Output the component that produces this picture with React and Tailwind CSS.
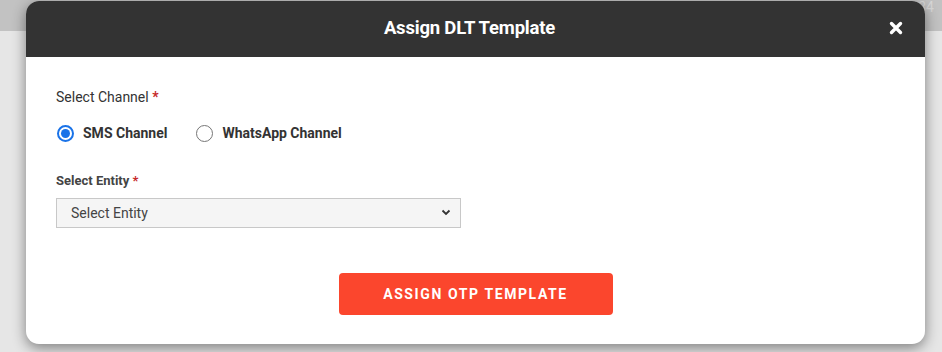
import React, { useState } from "react";

const font = { fontFamily: "Roboto, 'Liberation Sans', sans-serif" };

function Radio({ checked, label, onClick }) {
  return (
    <label className="flex items-center cursor-pointer" onClick={onClick}>
      <span
        className={`flex items-center justify-center w-[17px] h-[17px] rounded-full border-2 ${
          checked ? "border-[#1a73e8]" : "border-[#767676] border-[1.5px]"
        }`}
      >
        {checked && <span className="w-[9px] h-[9px] rounded-full bg-[#1a73e8]" />}
      </span>
      <span className="ml-[9px] text-[14px] font-bold text-[#333]">{label}</span>
    </label>
  );
}

export default function App() {
  const [channel, setChannel] = useState("sms");

  return (
    <div className="relative h-[352px] w-full overflow-hidden bg-[#e6e6e6]" style={font}>
      {/* page behind the overlay */}
      <div className="h-[31px] bg-[#c2c2c2] flex justify-end items-start pr-2">
        <span className="text-[14px] text-[#d8d8d8] leading-none">34</span>
      </div>

      {/* modal */}
      <div className="absolute left-[26px] top-[1px] w-[899px] h-[343px] bg-white rounded-[13px] overflow-hidden shadow-[0_4px_14px_rgba(0,0,0,0.45)] flex flex-col">
        <div className="relative h-[56px] bg-[#333333] flex items-center justify-center pr-[12px]">
          <h2 className="text-white text-[18.5px] font-bold tracking-[-0.2px]">Assign DLT Template</h2>
          <button type="button" className="absolute right-[22px] top-[20px] text-white">
            <svg width="14" height="14" viewBox="0 0 14 14">
              <path d="M2.5 2.5 11.5 11.5M11.5 2.5 2.5 11.5" stroke="white" strokeWidth="3.4" strokeLinecap="round" />
            </svg>
          </button>
        </div>

        <div className="flex flex-col px-[30px] pt-[31px]">
          <div className="text-[14px] text-[#333] leading-[18px]">
            Select Channel <span className="text-[#c62828] font-bold">*</span>
          </div>
          <div className="flex items-center gap-[29px] mt-[17px] pl-[1px]">
            <Radio checked={channel === "sms"} label="SMS Channel" onClick={() => setChannel("sms")} />
            <Radio checked={channel === "wa"} label="WhatsApp Channel" onClick={() => setChannel("wa")} />
          </div>

          <div className="mt-[28px] text-[13px] font-bold text-[#444] leading-[18px]">
            Select Entity <span className="text-[#c62828]">*</span>
          </div>
          <div className="relative mt-[8px] w-[405px] h-[30px]">
            <select
              defaultValue=""
              className="appearance-none w-full h-full bg-[#f5f5f5] border border-[#c8c8c8] text-[14px] text-[#444] pl-[14px] outline-none"
              style={font}
            >
              <option value="">Select Entity</option>
            </select>
            <svg className="absolute right-[10px] top-[11px] pointer-events-none" width="10" height="7" viewBox="0 0 10 7">
              <path d="M1.5 1.5 5 5 8.5 1.5" fill="none" stroke="#333" strokeWidth="1.8" />
            </svg>
          </div>

          <div className="flex justify-center mt-[45px]">
            <button
              type="button"
              className="w-[274px] h-[42px] rounded-[4px] bg-[#fb462d] text-white text-[14px] font-bold tracking-[1.6px] uppercase"
            >
              Assign OTP Template
            </button>
          </div>
        </div>
      </div>
    </div>
  );
}
